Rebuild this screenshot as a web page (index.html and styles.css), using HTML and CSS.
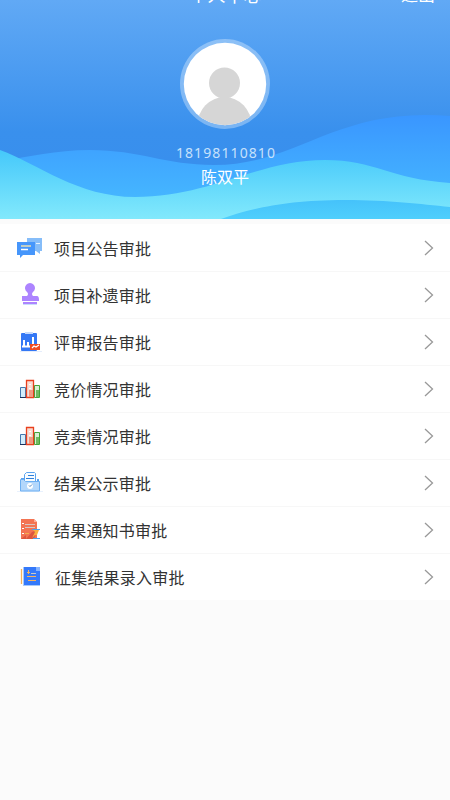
FILE: index.html
```html
<!DOCTYPE html>
<html lang="zh-CN">
<head>
<meta charset="utf-8">
<title>个人中心</title>
<link rel="stylesheet" href="styles.css">
</head>
<body>
<header class="hero">
  <svg class="waves" viewBox="0 0 450 219" aria-hidden="true">
    <defs>
      <linearGradient id="back" gradientUnits="userSpaceOnUse" x1="0" y1="115" x2="0" y2="198"><stop stop-color="#3a96ff"/><stop offset="1" stop-color="#45b6ff"/></linearGradient>
      <linearGradient id="mid" gradientUnits="userSpaceOnUse" x1="0" y1="150" x2="0" y2="219"><stop stop-color="#45c8fa"/><stop offset="1" stop-color="#82e9fc"/></linearGradient>
      <linearGradient id="front" gradientUnits="userSpaceOnUse" x1="0" y1="200" x2="0" y2="219"><stop stop-color="#45c2fb"/><stop offset="1" stop-color="#50cffc"/></linearGradient>
    </defs>
    <path fill="url(#back)" d="M0 161C30 157 55 150 90 150C140 150 165 165 214 165C292 165 330 115 425 115Q438 115 450 116V219H0Z"/>
    <path fill="url(#mid)" d="M0 150C38 164 78 197 135 197C210 197 258 160 325 160C375 160 390 179 450 183V219H0Z"/>
    <path fill="url(#front)" d="M221 219C250 209 285 200 345 200C390 200 420 204 450 207V219Z"/>
  </svg>
  <nav class="bar"><span class="bar-title">个人中心</span><span class="logout">退出</span></nav>
  <div class="profile">
    <svg class="avatar" viewBox="0 0 90 90" aria-hidden="true">
      <defs><clipPath id="face"><circle cx="45" cy="45" r="41.2"/></clipPath></defs>
      <circle cx="45" cy="45" r="45" fill="#fff" fill-opacity=".33"/>
      <circle cx="45" cy="45" r="41.2" fill="#fff"/>
      <g clip-path="url(#face)" fill="#d6d6d6"><circle cx="44.5" cy="44" r="15.5"/><ellipse cx="44.5" cy="86" rx="27" ry="28"/></g>
    </svg>
    <div class="phone">18198110810</div>
    <div class="name">陈双平</div>
  </div>
</header>
<main class="list">
  <a class="row">
    <svg class="icon" viewBox="0 0 30 26"><path fill="#86bdf9" d="M12 3h15v13h-2v3l-4-3h-9z"/><path stroke="#e3f1ff" d="M21 8.500h4"/><path fill="#4696fb" d="M2 7h18v13H8l-3 3v-3H2z"/><path stroke="#e8dfb5" stroke-width="1.500" d="M6 11h10"/><path stroke="#fff" stroke-width="1.500" d="M6 14.500h7"/></svg>
    <span class="label">项目公告审批</span><svg class="arrow" viewBox="0 0 10 16"><path d="M1 1l7.500 7L1 15"/></svg>
  </a>
  <a class="row">
    <svg class="icon" viewBox="0 0 30 26"><path fill="#ad84ff" d="M7 14h5q2-2 0-4a5 5 0 1 1 6 0q-2 2 0 4h4q2 0 2 4v1H7z"/><path fill="#ad84ff" d="M8 20h14v2H8z"/><path stroke="#c9defb" d="M8 22.500h14"/></svg>
    <span class="label">项目补遗审批</span><svg class="arrow" viewBox="0 0 10 16"><path d="M1 1l7.500 7L1 15"/></svg>
  </a>
  <a class="row">
    <svg class="icon" viewBox="0 0 30 26"><path fill="#e5edfb" d="M5 22h22v1H5z"/><rect x="6" y="4" width="16" height="18" rx="1" fill="#3478f5"/><path fill="#c5dafc" d="M10 3h8v2h-8z"/><path stroke="#fff" stroke-width="2" d="M9 11v6M13 13v4M18 8v9M7 17.500h9"/><path fill="#ef4b22" d="M15 15h10v6H15z"/><path fill="none" stroke="#fff" stroke-width="1.200" d="M17 19l2-2 2 1 3-2"/></svg>
    <span class="label">评审报告审批</span><svg class="arrow" viewBox="0 0 10 16"><path d="M1 1l7.500 7L1 15"/></svg>
  </a>
  <a class="row">
    <svg class="icon" viewBox="0 0 30 26"><path fill="#d3edfb" stroke="#4378ae" d="M5.500 11.500h5v10h-5z"/><path stroke="#1c315c" d="M5 21.500h6"/><path fill="#d8efd4" stroke="#42a63b" d="M19.500 9.500h5v12h-5z"/><path fill="#70ba62" d="M21 14h3v7h-3z"/><path fill="#f8dcd3" stroke="#e9401d" stroke-width="1.300" d="M11.500 4.500h7v17h-7z"/><path fill="#ef9a82" d="M14 14h4v7h-4z"/><path stroke="#fff" d="M14 8.500h2M14 12.500h2"/></svg>
    <span class="label">竞价情况审批</span><svg class="arrow" viewBox="0 0 10 16"><path d="M1 1l7.500 7L1 15"/></svg>
  </a>
  <a class="row">
    <svg class="icon" viewBox="0 0 30 26"><path fill="#d3edfb" stroke="#4378ae" d="M5.500 11.500h5v10h-5z"/><path stroke="#1c315c" d="M5 21.500h6"/><path fill="#d8efd4" stroke="#42a63b" d="M19.500 9.500h5v12h-5z"/><path fill="#70ba62" d="M21 14h3v7h-3z"/><path fill="#f8dcd3" stroke="#e9401d" stroke-width="1.300" d="M11.500 4.500h7v17h-7z"/><path fill="#ef9a82" d="M14 14h4v7h-4z"/><path stroke="#fff" d="M14 8.500h2M14 12.500h2"/></svg>
    <span class="label">竞卖情况审批</span><svg class="arrow" viewBox="0 0 10 16"><path d="M1 1l7.500 7L1 15"/></svg>
  </a>
  <a class="row">
    <svg class="icon" viewBox="0 0 30 26"><path fill="#e8f1fd" d="M2 21h26v1H2z"/><path fill="#5ba2ef" d="M6 8h4v7H6zM22 9h2v5h-2z"/><path fill="#f8fcff" stroke="#5ba4f0" d="M9.500 4.500l2-2h8l1 1v9h-11z"/><path stroke="#2f80dc" d="M13 5.500h6M11 8.500h8"/><path fill="#b4d7fb" stroke="#6daff2" d="M5.500 9.500h3l2 2h14v9.500h-19z"/><circle cx="15" cy="16" r="3" fill="#fff"/><path fill="none" stroke="#4c7fba" d="M14 15.500l1 1 2-2"/></svg>
    <span class="label">结果公示审批</span><svg class="arrow" viewBox="0 0 10 16"><path d="M1 1l7.500 7L1 15"/></svg>
  </a>
  <a class="row">
    <svg class="icon" viewBox="0 0 30 26"><path fill="#f37453" d="M6 2h13l3 3v17H6z"/><path fill="#dc563e" d="M6 22h13l3-9-5 2-6 7v-4z"/><path fill="#ffad98" d="M19 2v3h3z"/><path stroke="#fff" d="M7 6.500h2M7 11.500h2M7 16.500h2"/><path stroke="#d9c7c2" d="M10 7.500h10M10 10.500h10"/><path stroke="#f5ae4c" d="M10 16.500h4"/><path fill="#f9ae3e" d="M18 13h6l-2 5h-2l-3 3 3-6z"/><path stroke="#4ba2ee" d="M17 12.500h8M18 21.500h7"/></svg>
    <span class="label">结果通知书审批</span><svg class="arrow" viewBox="0 0 10 16"><path d="M1 1l7.500 7L1 15"/></svg>
  </a>
  <a class="row row-last">
    <svg class="icon" viewBox="0 0 30 26"><path stroke="#f5b35c" stroke-width="1.300" d="M6.500 5v15"/><path fill="#a8cafa" d="M8 3h2v19H8zM8 21h17v1H8z"/><path fill="#3479fa" d="M9 3h12l4 4v14H9z"/><path fill="#85b3ff" d="M21 3v4h4V3z"/><path stroke="#f6b35f" d="M12 8.500h3M13.500 6v4M12 12.500h9"/><path stroke="#c8c9c5" d="M16 9.500h5"/><path stroke="#f6b35f" d="M13 16.500h8"/></svg>
    <span class="label">征集结果录入审批</span><svg class="arrow" viewBox="0 0 10 16"><path d="M1 1l7.500 7L1 15"/></svg>
  </a>
</main>
</body>
</html>
```
FILE: styles.css
```css
* { box-sizing: border-box; }
body {
  margin: 0;
  height: 800px;
  overflow: hidden;
  background: #fbfbfb;
  color: #333;
  font-family: "Noto Sans CJK SC", sans-serif;
}
.hero {
  position: relative;
  height: 219px;
  overflow: hidden;
  color: #fff;
  background: linear-gradient(#61a9f5, #3990ed 60%, #378ded);
}
.waves {
  position: absolute;
  inset: 0;
  width: 100%;
  height: 100%;
}
.bar {
  position: relative;
  display: grid;
  grid-template-columns: 1fr auto 1fr;
  align-items: center;
  height: 44px;
  margin-top: -28px;
  padding-right: 15px;
}
.bar-title {
  grid-column: 2;
  padding-left: 16px;
  font-size: 18px;
  line-height: 24px;
}
.logout {
  justify-self: end;
  font-size: 17px;
  line-height: 24px;
}
.profile {
  position: relative;
  display: flex;
  flex-direction: column;
  align-items: center;
  padding-top: 23px;
}
.avatar { width: 90px; height: 90px; }
.phone {
  margin-top: 13px;
  padding-left: 2px;
  font-family: "Noto Sans", "Noto Sans CJK SC", sans-serif;
  font-size: 14px;
  line-height: 22px;
  letter-spacing: 1.1px;
  color: #c6e1fc;
}
.name {
  font-size: 16px;
  line-height: 24px;
}
.list { padding-top: 1px; margin-top: 5px; background: #fff; }
.row {
  display: flex;
  align-items: center;
  height: 47px;
  padding: 0 16px 0 15px;
  border-bottom: 1px solid #f7f7f7;
}
.row-last { height: 46px; border-bottom: 0; }
.icon { width: 30px; height: 26px; }
.label {
  flex: 1;
  margin-left: 9px;
  font-size: 16px;
  line-height: 24px;
  letter-spacing: .2px;
}
.row-last .label { margin-left: 10px; }
.arrow {
  width: 10px;
  height: 16px;
  fill: none;
  stroke: #999;
  stroke-width: 1.3;
}
```
